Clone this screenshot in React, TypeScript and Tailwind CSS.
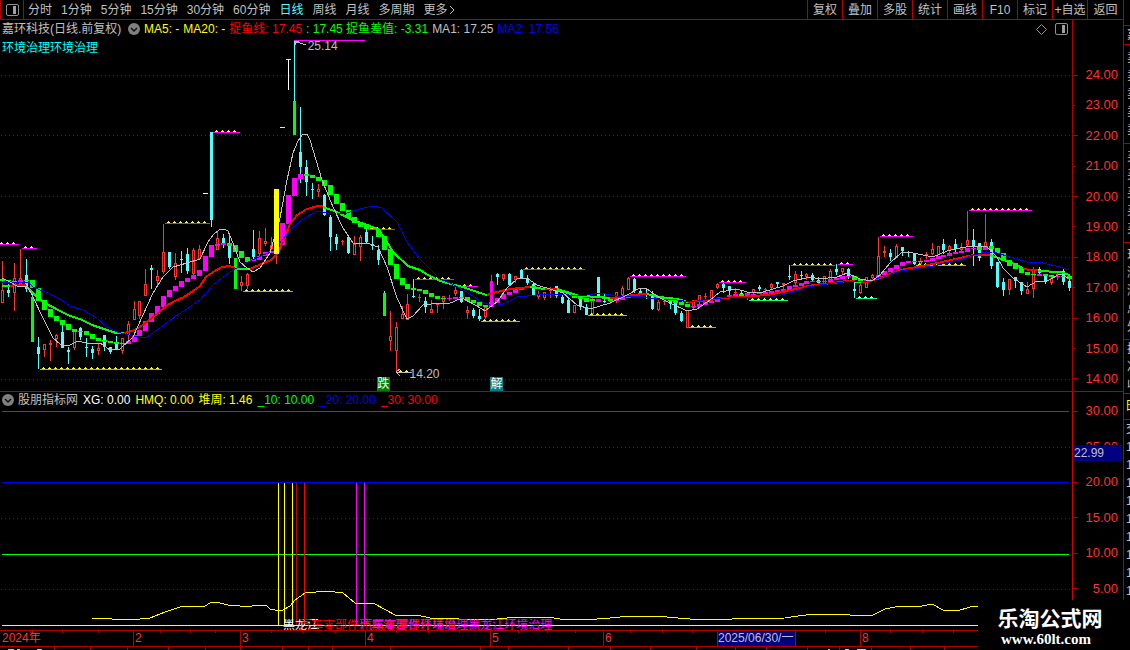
import { useState } from "react";

type Candle = [number, number, number, number, number, string];
type Step = [number, number, number, string];

// x, high, body top, body bottom, low, r = rising / c = falling
const candles: Candle[] = [
  [2, 261, 290, 303, 303, "r"], [8, 284, 290, 293, 297, "c"], [14, 263, 278, 293, 311, "r"], [20, 249, 278, 284, 284, "r"],
  [26, 259, 275, 289, 292, "c"], [32, 293, 297, 298, 298, "c"], [38, 337, 347, 354, 369, "c"], [44, 344, 344, 350, 357, "r"],
  [50, 340, 343, 345, 361, "r"], [56, 334, 335, 339, 347, "r"], [62, 325, 332, 348, 348, "c"], [68, 347, 350, 352, 364, "c"],
  [74, 329, 331, 348, 350, "r"], [80, 327, 328, 337, 340, "c"], [86, 338, 347, 348, 357, "c"], [92, 346, 349, 353, 359, "c"],
  [98, 344, 348, 351, 355, "r"], [104, 335, 335, 347, 351, "c"], [110, 347, 347, 352, 354, "c"], [116, 336, 344, 350, 350, "c"],
  [122, 338, 338, 351, 354, "r"], [128, 321, 324, 335, 344, "r"], [134, 301, 309, 320, 320, "r"], [139, 301, 301, 316, 319, "r"],
  [145, 269, 284, 296, 296, "r"], [151, 265, 268, 270, 289, "c"], [157, 270, 276, 281, 285, "r"], [163, 224, 252, 272, 274, "r"],
  [169, 252, 252, 267, 269, "c"], [175, 253, 263, 277, 280, "r"], [181, 251, 259, 260, 273, "c"], [187, 248, 254, 271, 274, "c"],
  [193, 248, 250, 274, 275, "r"], [199, 245, 249, 259, 260, "r"], [211, 132, 132, 220, 227, "c"], [217, 232, 238, 250, 250, "r"],
  [223, 234, 238, 243, 248, "c"], [229, 235, 244, 258, 264, "c"], [241, 276, 282, 286, 291, "r"], [247, 273, 274, 286, 289, "r"],
  [253, 230, 249, 257, 259, "c"], [259, 231, 238, 254, 259, "r"], [265, 228, 241, 244, 246, "r"], [271, 237, 245, 250, 251, "r"],
  [276, 250, 254, 254, 264, "r"], [294, 40, 101, 101, 101, "c"], [300, 107, 152, 167, 183, "c"], [306, 160, 167, 182, 196, "c"],
  [312, 183, 189, 190, 199, "c"], [318, 184, 189, 192, 197, "r"], [324, 194, 195, 215, 216, "c"], [330, 215, 217, 237, 251, "c"],
  [336, 234, 237, 244, 250, "c"], [342, 240, 241, 242, 245, "r"], [348, 237, 237, 253, 254, "c"], [354, 236, 244, 255, 255, "r"],
  [360, 235, 237, 247, 261, "r"], [366, 229, 232, 242, 243, "c"], [372, 236, 244, 246, 250, "c"], [378, 245, 250, 260, 265, "c"],
  [384, 291, 293, 294, 294, "c"], [390, 311, 336, 341, 351, "r"], [396, 322, 327, 351, 372, "r"], [402, 306, 314, 319, 319, "r"],
  [407, 294, 304, 320, 320, "r"], [413, 279, 296, 297, 298, "c"], [419, 294, 297, 298, 302, "r"], [425, 297, 301, 307, 313, "c"],
  [431, 300, 309, 313, 313, "r"], [437, 303, 304, 305, 313, "r"], [443, 296, 296, 302, 309, "r"], [449, 295, 298, 299, 301, "r"],
  [455, 287, 290, 294, 296, "r"], [461, 291, 291, 302, 303, "c"], [467, 306, 310, 313, 319, "r"], [473, 308, 310, 316, 318, "c"],
  [479, 309, 316, 319, 321, "c"], [485, 307, 307, 317, 319, "r"], [491, 275, 281, 281, 281, "r"], [497, 273, 274, 277, 285, "c"],
  [503, 274, 274, 279, 281, "r"], [509, 273, 274, 285, 285, "c"], [515, 276, 276, 280, 283, "r"], [521, 269, 270, 278, 279, "c"],
  [527, 275, 278, 283, 285, "c"], [533, 283, 284, 295, 295, "c"], [538, 291, 294, 297, 299, "r"], [544, 292, 292, 298, 300, "r"],
  [550, 287, 290, 291, 298, "r"], [556, 286, 286, 296, 298, "c"], [562, 295, 297, 303, 304, "c"], [568, 298, 300, 313, 313, "c"],
  [574, 305, 305, 313, 313, "r"], [580, 297, 298, 307, 310, "c"], [586, 304, 307, 315, 315, "c"], [592, 298, 300, 314, 314, "r"],
  [598, 277, 277, 297, 298, "c"], [604, 294, 301, 302, 303, "c"], [610, 297, 300, 302, 304, "r"], [616, 292, 292, 299, 303, "r"],
  [622, 286, 288, 295, 296, "r"], [628, 277, 278, 290, 290, "r"], [634, 278, 279, 291, 293, "c"], [640, 289, 291, 293, 293, "c"],
  [646, 288, 294, 295, 299, "c"], [652, 291, 295, 309, 310, "c"], [658, 300, 302, 310, 311, "r"], [664, 298, 301, 302, 305, "r"],
  [670, 300, 300, 304, 309, "c"], [675, 302, 302, 313, 315, "c"], [681, 311, 313, 321, 322, "c"], [687, 310, 310, 328, 328, "r"],
  [693, 300, 300, 308, 310, "r"], [699, 295, 295, 302, 305, "r"], [705, 293, 296, 297, 300, "r"], [711, 290, 290, 299, 299, "r"],
  [717, 283, 284, 288, 289, "r"], [723, 283, 284, 288, 293, "c"], [729, 286, 286, 291, 296, "c"], [735, 288, 292, 293, 296, "r"],
  [741, 290, 293, 295, 297, "c"], [747, 292, 293, 298, 300, "r"], [753, 289, 289, 293, 295, "r"], [759, 285, 287, 289, 291, "c"],
  [765, 288, 289, 290, 292, "r"], [771, 283, 284, 288, 290, "r"], [777, 282, 282, 284, 288, "c"], [783, 283, 283, 285, 290, "r"],
  [789, 265, 276, 277, 280, "c"], [795, 271, 274, 283, 286, "r"], [801, 271, 275, 276, 278, "c"], [806, 273, 274, 277, 280, "r"],
  [812, 273, 275, 280, 282, "c"], [818, 277, 280, 283, 285, "c"], [824, 276, 276, 284, 284, "r"], [830, 269, 271, 280, 283, "r"],
  [836, 264, 269, 272, 275, "c"], [842, 268, 268, 272, 275, "r"], [848, 268, 269, 277, 279, "c"], [854, 282, 289, 291, 298, "c"],
  [860, 282, 285, 293, 294, "r"], [866, 277, 277, 288, 288, "r"], [872, 274, 275, 278, 279, "r"], [878, 237, 256, 277, 280, "r"],
  [884, 246, 251, 253, 257, "r"], [890, 249, 253, 257, 261, "c"], [896, 244, 246, 258, 258, "r"], [902, 247, 247, 251, 256, "c"],
  [908, 251, 252, 253, 257, "c"], [914, 254, 254, 264, 265, "c"], [920, 258, 261, 264, 265, "r"], [926, 252, 254, 255, 259, "r"],
  [932, 243, 249, 254, 255, "r"], [938, 246, 246, 255, 255, "r"], [943, 239, 244, 250, 254, "c"], [949, 245, 246, 251, 254, "r"],
  [955, 239, 244, 249, 252, "c"], [961, 243, 247, 250, 253, "r"], [967, 211, 240, 245, 246, "r"], [973, 229, 240, 247, 266, "c"],
  [979, 243, 243, 258, 261, "c"], [985, 214, 242, 247, 248, "r"], [991, 239, 242, 266, 269, "c"], [997, 262, 262, 287, 288, "c"],
  [1003, 278, 282, 290, 296, "c"], [1009, 279, 279, 290, 295, "r"], [1015, 277, 277, 281, 288, "c"], [1021, 282, 282, 291, 295, "c"],
  [1027, 282, 289, 294, 294, "r"], [1033, 267, 270, 289, 298, "r"], [1039, 267, 269, 273, 274, "c"], [1045, 274, 274, 281, 284, "c"],
  [1051, 276, 278, 283, 285, "r"], [1057, 271, 274, 275, 280, "r"], [1063, 269, 271, 282, 285, "c"], [1069, 276, 281, 288, 291, "c"],
];

// x, top, bottom, m = up trend / g = down trend
const steps: Step[] = [
  [2, 279, 281, "g"], [8, 280, 281, "g"], [14, 281, 282, "g"], [20, 280, 282, "m"], [26, 280, 281, "g"], [32, 280, 288, "g"],
  [38, 288, 301, "g"], [44, 300, 310, "g"], [50, 309, 317, "g"], [56, 316, 321, "g"], [62, 320, 325, "g"], [68, 324, 330, "g"],
  [74, 329, 332, "g"], [80, 331, 332, "g"], [86, 331, 335, "g"], [92, 334, 339, "g"], [98, 338, 341, "g"], [104, 340, 342, "g"],
  [110, 341, 343, "g"], [116, 342, 344, "g"], [122, 343, 344, "g"], [128, 341, 344, "m"], [134, 335, 342, "m"], [139, 330, 336, "m"],
  [145, 321, 331, "m"], [151, 313, 322, "m"], [157, 306, 314, "m"], [163, 296, 307, "m"], [169, 290, 297, "m"], [175, 286, 291, "m"],
  [181, 281, 287, "m"], [187, 278, 282, "m"], [193, 275, 279, "m"], [199, 270, 276, "m"], [205, 256, 271, "m"], [211, 245, 257, "m"],
  [217, 244, 246, "m"], [223, 243, 245, "m"], [229, 243, 246, "g"], [235, 245, 252, "g"], [241, 251, 258, "g"], [247, 257, 262, "g"],
  [253, 259, 261, "m"], [259, 256, 260, "m"], [265, 252, 256, "m"], [271, 251, 253, "m"], [282, 223, 245, "m"], [288, 195, 224, "m"],
  [294, 178, 196, "m"], [300, 174, 179, "m"], [306, 174, 176, "g"], [312, 175, 178, "g"], [318, 177, 181, "g"], [324, 180, 186, "g"],
  [330, 185, 195, "g"], [336, 194, 204, "g"], [342, 203, 211, "g"], [348, 210, 218, "g"], [354, 217, 223, "g"], [360, 222, 227, "g"],
  [366, 224, 229, "g"], [372, 227, 230, "g"], [378, 229, 237, "g"], [384, 236, 250, "g"], [390, 249, 265, "g"], [396, 264, 279, "g"],
  [402, 278, 285, "g"], [407, 284, 289, "g"], [413, 288, 290, "g"], [419, 289, 291, "g"], [425, 290, 294, "g"], [431, 293, 297, "g"],
  [437, 296, 299, "g"], [443, 298, 299, "g"], [449, 298, 299, "m"], [455, 297, 299, "m"], [461, 297, 298, "g"], [467, 297, 301, "g"],
  [473, 300, 303, "g"], [479, 302, 306, "g"], [485, 305, 307, "g"], [491, 302, 307, "m"], [497, 298, 303, "m"], [503, 294, 299, "m"],
  [509, 292, 295, "m"], [515, 289, 293, "m"], [521, 288, 290, "m"], [527, 286, 288, "m"], [533, 286, 288, "g"], [538, 287, 289, "g"],
  [544, 288, 290, "g"], [550, 288, 289, "m"], [556, 289, 291, "g"], [562, 291, 293, "g"], [568, 292, 295, "g"], [574, 295, 298, "g"],
  [580, 297, 299, "g"], [586, 298, 302, "g"], [592, 299, 301, "g"], [598, 299, 302, "m"], [604, 298, 299, "g"], [610, 299, 301, "g"],
  [616, 299, 301, "m"], [622, 297, 300, "m"], [628, 295, 298, "m"], [634, 294, 295, "m"], [640, 293, 295, "m"], [646, 293, 295, "g"],
  [652, 294, 296, "g"], [658, 296, 298, "g"], [664, 297, 299, "g"], [670, 299, 301, "g"], [675, 300, 303, "g"], [681, 302, 305, "g"],
  [687, 304, 307, "g"], [693, 306, 307, "m"], [699, 304, 307, "m"], [705, 302, 305, "m"], [711, 301, 303, "m"], [717, 299, 302, "m"],
  [723, 297, 298, "m"], [729, 295, 297, "m"], [735, 294, 296, "m"], [741, 294, 297, "g"], [747, 293, 296, "m"], [753, 294, 295, "m"],
  [759, 293, 294, "m"], [765, 292, 294, "m"], [771, 291, 293, "m"], [777, 290, 292, "m"], [783, 289, 291, "m"], [789, 286, 290, "m"],
  [795, 285, 287, "m"], [801, 283, 286, "m"], [806, 281, 284, "m"], [812, 281, 282, "m"], [818, 281, 282, "g"], [824, 281, 282, "m"],
  [830, 279, 282, "m"], [836, 278, 280, "m"], [842, 276, 279, "m"], [848, 276, 277, "m"], [854, 276, 280, "g"], [860, 279, 281, "g"],
  [866, 280, 281, "m"], [872, 279, 281, "m"], [878, 275, 279, "m"], [884, 271, 275, "m"], [890, 268, 272, "m"], [896, 265, 269, "m"],
  [902, 262, 266, "m"], [908, 261, 263, "m"], [914, 261, 262, "m"], [920, 261, 262, "g"], [926, 260, 262, "m"], [932, 258, 261, "m"],
  [938, 256, 259, "m"], [943, 255, 257, "m"], [949, 253, 256, "m"], [955, 252, 254, "m"], [961, 251, 253, "m"], [967, 248, 252, "m"],
  [973, 248, 249, "m"], [979, 247, 250, "g"], [985, 246, 250, "m"], [991, 246, 249, "g"], [997, 248, 253, "g"], [1003, 253, 261, "g"],
  [1009, 260, 266, "g"], [1015, 263, 269, "g"], [1021, 268, 273, "g"], [1027, 272, 275, "g"], [1033, 274, 275, "g"], [1039, 274, 276, "m"],
  [1045, 274, 276, "g"], [1051, 275, 277, "g"], [1057, 276, 277, "m"], [1063, 276, 277, "g"], [1069, 276, 279, "g"],
];

// support / pressure segments: x1, x2, y, colour
const levels: [number, number, number, string][] = [
  [-2, 19, 244, "#ff00ff"], [22, 37, 248, "#ff00ff"], [165, 210, 223, "#ff00ff"], [213, 240, 132, "#ff00ff"],
  [368, 395, 229, "#ff00ff"], [415, 454, 279, "#ff00ff"], [461, 478, 286, "#ff00ff"], [523, 585, 269, "#ff00ff"],
  [630, 686, 276, "#ff00ff"], [719, 746, 282, "#ff00ff"], [791, 835, 265, "#ff00ff"], [838, 853, 264, "#ff00ff"],
  [880, 913, 236, "#ff00ff"], [969, 1032, 210, "#ff00ff"], [40, 162, 369, "#00ff80"], [243, 293, 291, "#00ff80"],
  [397, 412, 372, "#00ff80"], [481, 520, 321, "#00ff80"], [588, 627, 315, "#00ff80"], [689, 716, 327, "#00ff80"],
  [749, 788, 300, "#00ff80"], [856, 877, 298, "#00ff80"], [916, 966, 265, "#00ff80"],
];

const trend: [string, string][] = [
  ["#00ff00", "2,286 10,286"],
  ["#ff0000", "10,286 15,285 26,285"],
  ["#00ff00", "26,286 30,290 36,296 45,303 60,311 70,316 80,319 92,325 104,329 116,333 124,333"],
  ["#ff0000", "124,333 132,331 140,327 148,321 157,314 166,306 175,301 184,297 193,291 200,286 206,277 213,272 222,267 230,266 235,268"],
  ["#00ff00", "235,269 250,269"],
  ["#ff0000", "250,269 259,265 271,260 278,253 284,240 290,224 297,215 307,209 318,206 323,206"],
  ["#00ff00", "323,207 337,212 350,219 367,225 378,229 387,242 393,252 408,266 420,270 428,275 440,281 447,283 463,287 480,293 487,295"],
  ["#ff0000", "487,295 497,292 510,289 530,287"],
  ["#00ff00", "530,287 545,289"],
  ["#ff0000", "545,289 557,289"],
  ["#00ff00", "557,289 570,293 580,296 600,297 610,298"],
  ["#ff0000", "610,298 620,297 633,295 647,294"],
  ["#00ff00", "647,294 660,297 677,299 688,302"],
  ["#ff0000", "688,302 700,301 710,300 720,298 740,297 767,295 787,291 813,285 833,283 847,281 855,281"],
  ["#00ff00", "855,282 861,282"],
  ["#ff0000", "861,282 867,282 883,277 900,270 933,264 960,258 973,255 990,255"],
  ["#00ff00", "990,255 1007,261 1023,268"],
  ["#ff0000", "1023,268 1028,270 1038,270"],
  ["#00ff00", "1038,271 1060,272 1070,275"],
];

const ma2 =
  "2,282 28,282 33,287 50,294 60,299 70,306 83,310 97,318 107,327 117,332 137,337 147,337 160,328 173,318 187,309 200,300 213,285 230,272 248,262 270,252 278,245 290,230 303,219 318,211 327,213 347,213 360,209 373,206 382,208 397,222 407,242 420,259 440,279 450,283 467,292 480,301 493,306 503,304 517,297 537,295 557,294 580,296 600,293 617,296 637,296 657,299 677,300 690,302 710,299 733,297 767,298 790,293 807,287 827,284 843,282 867,281 883,277 900,271 933,266 960,260 973,255 987,252 997,253 1010,257 1027,262 1043,263 1060,267 1069,270";

const ma1 =
  "2,278 10,282 17,286 27,286 33,297 43,318 53,338 60,344 68,346 78,341 90,344 100,343 110,350 120,349 133,337 143,315 153,293 163,277 173,267 187,263 200,259 208,242 214,234 219,230 224,229 228,231 233,243 240,262 247,268 253,272 260,268 270,253 280,218 287,180 293,153 298,141 302,135 307,134 310,140 313,150 322,180 333,207 343,228 353,243 367,243 378,247 387,267 397,298 407,319 413,316 423,305 440,303 448,304 462,298 477,306 485,311 497,302 507,288 517,279 527,278 537,285 553,290 563,293 577,305 590,309 610,303 627,295 640,288 647,289 660,298 670,303 687,311 697,309 710,300 720,292 737,289 747,292 763,292 783,286 793,281 810,277 820,279 837,277 847,273 860,279 872,281 880,275 890,263 902,252 913,253 933,257 947,251 960,248 973,246 987,247 997,257 1003,268 1013,278 1027,287 1037,281 1047,281 1060,274 1068,278";

const week =
  "92,618 112,619 130,620 150,618 165,612 180,607 205,606 210,603 216,602 228,605 240,606 247,607 257,605 266,605 270,609 275,610 283,610 290,606 295,600 305,593 327,591 343,593 355,603 375,604 395,615 417,615 430,618 487,620 517,617 547,617 560,619 585,620 610,618 630,616 655,616 690,619 732,619 785,618 798,616 815,614 845,614 850,615 873,615 885,609 900,606 922,606 932,604 943,610 957,611 970,607 980,606";

const bars: [number, string][] = [
  [278, "#ffff00"], [284, "#ffff00"], [292, "#ffff00"], [296, "#c00000"], [304, "#ff0000"], [356, "#ff00ff"], [364, "#ff00ff"],
];

const periods = ["分时", "1分钟", "5分钟", "15分钟", "30分钟", "60分钟", "日线", "周线", "月线", "多周期", "更多"];
const tools = ["复权", "叠加", "多股", "统计", "画线", "F10", "标记", "+自选", "返回"];
const prices = [24, 23, 22, 21, 20, 19, 18, 17, 16, 15, 14];
const scale = [30, 25, 20, 15, 10, 5];
const topTicks = [30, 62, 98, 160, 190, 215, 271, 302, 334, 396, 428, 459, 518, 547, 575, 630, 662, 692, 825, 890, 922, 953];
const lowTicks = [54, 90, 127, 168, 205, 240, 282, 308, 332, 390, 480, 508, 568, 610, 650, 696, 735, 766, 807, 839, 871, 910, 944];

function PanelIcon() {
  return (
    <svg width="13" height="12" viewBox="0 0 13 12" fill="none">
      <rect x="0.5" y="0.5" width="12" height="11" rx="1.5" stroke="#909090" />
      <rect x="7" y="2" width="3" height="8" fill="#a0a0a0" />
    </svg>
  );
}

function RoundArrow() {
  return (
    <svg width="12" height="12" viewBox="0 0 12 12" fill="none">
      <circle cx="6" cy="6" r="6" fill="#808080" />
      <path d="M3 5l3 3 3-3" stroke="#101010" strokeWidth="1.5" />
    </svg>
  );
}

function Triangles({ x1, x2, y }: { x1: number; x2: number; y: number }) {
  const list = [];
  for (let x = x1 + 3; x <= x2 - 4; x += 6) list.push(x);
  return (
    <>
      {list.map((x) => (
        <path key={x} d={`M${x} ${y - 2}h1v1h1v1h-3v-1h1z`} fill="#ffff00" />
      ))}
    </>
  );
}

function KLine() {
  return (
    <svg className="block h-[353px] w-full" viewBox="0 38 1072 353" preserveAspectRatio="none" shapeRendering="crispEdges" fill="none">
      {[75, 135, 196, 257, 318, 379].map((y) => (
        <path key={y} d={`M1 ${y}.5H1072`} stroke="#a00000" strokeDasharray="1 3" />
      ))}

      {candles.map(([x, high, top, bottom, low, kind]) => {
        const color = kind === "r" ? "#ff3232" : "#54fcfc";
        return (
          <g key={x}>
            <path d={`M${x}.5 ${high}V${top}M${x}.5 ${bottom}V${low}`} stroke={color} />
            {kind === "r" && bottom - top > 2 ? (
              <rect x={x - 0.5} y={top + 0.5} width="2" height={bottom - top - 1} stroke={color} />
            ) : (
              <rect x={x - 1} y={top} width="3" height={bottom - top} fill={color} />
            )}
          </g>
        );
      })}

      {steps.map(([x, top, bottom, kind]) => (
        <rect key={x} x={x - 2} y={top} width="5" height={bottom - top} fill={kind === "m" ? "#ff00ff" : "#00ff00"} />
      ))}

      <rect x="31" y="297" width="3" height="45" fill="#00ff00" />
      <rect x="234" y="258" width="3" height="31" fill="#00ff00" />
      <rect x="293" y="101" width="3" height="34" fill="#00ff00" />
      <rect x="383" y="293" width="3" height="23" fill="#00ff00" />
      <rect x="490" y="281" width="3" height="26" fill="#ff00ff" />

      {levels.map(([x1, x2, y, color]) => (
        <g key={`${x1}-${y}`}>
          <path d={`M${x1} ${y}.5H${x2}`} stroke={color} />
          <Triangles x1={x1} x2={x2} y={y} />
        </g>
      ))}
      <path d="M294 40.5H365" stroke="#ff00ff" />

      {trend.map(([color, points]) => (
        <polyline key={points} points={points} stroke={color} strokeWidth="2" />
      ))}
      <polyline points={ma2} stroke="#0000ff" />
      <polyline points={ma1} stroke="#c0c0c0" />

      <rect x="274" y="189" width="5" height="65" fill="#ffff00" />
      <path d="M288.5 60V90" stroke="#ffffff" />
      <path d="M286 59.5h5M280 127.5h5" stroke="#ffff00" />
      <path d="M203 193.5h5" stroke="#ffff80" />

      <path d="M295 41.5h4M295.5 42v3M296 42l4 1 6 2" stroke="#c0c0c0" />
      <path d="M396 372.5H411M400 369l-4 3 4 4" stroke="#c0c0c0" />
    </svg>
  );
}

function Indicator() {
  return (
    <svg className="block h-[222px] w-full" viewBox="0 408 1072 222" preserveAspectRatio="none" shapeRendering="crispEdges" fill="none">
      {[447, 518, 589].map((y) => (
        <path key={y} d={`M1 ${y}.5H1072`} stroke="#a00000" strokeDasharray="1 3" />
      ))}
      <path d="M2 411.5H1069" stroke="#ff0000" />
      <path d="M2 482.5H1069" stroke="#0000ff" />
      <path d="M2 554.5H1069" stroke="#00ff00" />
      <path d="M2 625.5H1069" stroke="#ffff00" />
      {bars.map(([x, color]) => (
        <path key={x} d={`M${x}.5 483V625`} stroke={color} />
      ))}
      <polyline points={week} stroke="#ffff00" />
    </svg>
  );
}

function App() {
  const [period, setPeriod] = useState("日线");

  return (
    <div className="relative flex min-h-screen w-full overflow-hidden bg-black font-['Liberation_Sans','Noto_Sans_CJK_SC',sans-serif] text-[12px] leading-4 text-[#c0c0c0]">
      <main className="flex min-w-0 flex-1 flex-col">
        <nav className="flex h-5 items-stretch justify-between border-b border-[#b00000]">
          <div className="flex items-center gap-1">
            <button aria-label="侧栏" className="flex h-full w-6 items-center justify-center border-x border-[#b00000]">
              <PanelIcon />
            </button>
            <div className="flex items-center gap-[9px]">
              {periods.map((p) => (
                <button
                  key={p}
                  onClick={() => setPeriod(p)}
                  className={p === period ? "whitespace-nowrap text-[#54fcfc]" : "whitespace-nowrap"}
                >
                  {p}
                </button>
              ))}
              <svg className="-ml-2" width="6" height="10" viewBox="0 0 6 10" fill="none">
                <path d="M1 1l4 4-4 4" stroke="#c0c0c0" />
              </svg>
            </div>
          </div>
          <div className="flex">
            {tools.map((t) => (
              <button key={t} className="w-[35px] whitespace-nowrap border-l border-[#b00000] text-center last:w-9">
                {t}
              </button>
            ))}
          </div>
        </nav>

        <section className="flex border-b border-[#b00000]">
          <div className="relative min-w-0 flex-1">
            <header className="flex h-[18px] items-center gap-1 whitespace-nowrap pl-[2px] pr-1">
              <span className="w-[122px]">嘉环科技(日线.前复权)</span>
              <RoundArrow />
              <span className="text-[#ffff00]">MA5: -</span>
              <span className="text-[#ffff00]">MA20: -</span>
              <span className="text-[#ff0000]">捉鱼线: 17.45</span>
              <span className="text-[#00ff00]">: 17.45 捉鱼差值: -3.31</span>
              <span>MA1: 17.25</span>
              <span className="text-[#0000ff]">MA2: 17.56</span>
              <div className="ml-auto flex items-center gap-2">
                <svg width="11" height="11" viewBox="0 0 11 11" fill="none">
                  <path d="M5.5 0.5l5 5-5 5-5-5z" stroke="#909090" />
                </svg>
                <PanelIcon />
              </div>
            </header>
            <KLine />
            <span className="absolute left-[2px] top-5 text-[#00ffff]">环境治理环境治理</span>
            <span className="absolute left-[28.7%] top-[18px]">25.14</span>
            <span className="absolute left-[38.2%] top-[346px]">14.20</span>
            <span className="absolute bottom-0 left-[35.15%] h-[14px] w-[13px] bg-[#008000] text-center leading-[14px] text-white">跌</span>
            <span className="absolute bottom-0 left-[45.7%] h-[14px] w-[13px] bg-[#008080] text-center leading-[14px] text-white">解</span>
          </div>
          <div className="flex w-[51px] flex-col justify-between border-l border-[#b00000] pb-1 pt-[47px] text-[13px] text-[#ff3232]">
            {prices.map((p) => (
              <div key={p} className="flex items-center justify-between pr-[5px]">
                <i className={p % 2 ? "h-px w-[2px] bg-[#b00000]" : "h-px w-[5px] bg-[#b00000]"} />
                {p}.00
              </div>
            ))}
          </div>
        </section>

        <section className="flex">
          <div className="relative min-w-0 flex-1 overflow-hidden">
            <header className="flex h-4 items-center gap-[5px] whitespace-nowrap pl-[2px]">
              <RoundArrow />
              <span className="-ml-px">股朋指标网</span>
              <span className="text-white">XG: 0.00</span>
              <span className="text-[#ffff00]">HMQ: 0.00</span>
              <span className="text-[#ffff00]">堆周: 1.46</span>
              <span className="text-[#00ff00]">_10: 10.00</span>
              <span className="text-[#0000ff]">_20: 20.00</span>
              <span className="text-[#ff0000]">_30: 30.00</span>
            </header>
            <Indicator />
            <div className="absolute bottom-0 left-0 h-[11px] w-full overflow-hidden whitespace-nowrap">
              <span className="absolute left-[26.4%] top-[-2px] text-white">黑龙江</span>
              <span className="absolute left-[27.9%] top-[-2px] text-[#ff0000]">汽车零部件环境治理</span>
              <span className="absolute left-[34.7%] top-[-2px] text-[#ff0000]">汽车零部件环境</span>
              <span className="absolute left-[33.6%] top-[-2px] text-[#ff00ff]">汽车零部件环境治理黑龙江环境治理</span>
            </div>
          </div>
          <div className="relative flex w-[51px] flex-col justify-between border-l border-[#d00000] pb-[33px] pt-[11px] text-[13px] text-[#ff3232]">
            {scale.map((s) => (
              <div key={s} className="flex items-center justify-between pr-[5px]">
                <i className="h-px w-[5px] bg-[#b00000]" />
                {s}.00
              </div>
            ))}
            <output className="absolute left-0 top-[53px] h-4 w-[49px] bg-[#000080] pl-px text-[12px] text-[#c0c0c0]">22.99</output>
          </div>
        </section>

        <footer>
          <div className="relative grid h-[17px] grid-cols-[133fr_107fr_125fr_125fr_113fr_114fr_79fr_64fr_263fr] border-y border-[#b00000] leading-[15px] text-[#ff3232]">
            <span className="pl-[2px]">2024年</span>
            {["2", "3", "4", "5", "6"].map((m) => (
              <span key={m} className="border-l border-[#b00000] pl-px">{m}</span>
            ))}
            <span className="whitespace-nowrap border-x border-[#b00000] bg-[#000080] text-[#c0c0c0]">2025/06/30/一</span>
            <span />
            <span className="border-l border-[#b00000] pl-px">8</span>
            <svg className="absolute left-0 top-0 h-[2px] w-full" viewBox="0 0 1123 2" preserveAspectRatio="none">
              {topTicks.map((x) => (
                <rect key={x} x={x} width="1" height="2" fill="#b00000" />
              ))}
            </svg>
          </div>
          <svg className="block h-[3px] w-full" viewBox="0 0 1123 3" preserveAspectRatio="none" shapeRendering="crispEdges">
            {lowTicks.map((x) => (
              <rect key={x} x={x} width="1" height="3" fill="#b00000" />
            ))}
            <path d="M8 2.5h6m3 0h3m17 0h5M828 2.5h2" stroke="#c0c0c0" />
            <path d="M845 2.5h4m8 0h9" stroke="#54fcfc" />
          </svg>
        </footer>
      </main>

      <aside aria-hidden="true" className="flex w-[7px] flex-col overflow-hidden border-l border-[#b00000] pt-[25px]">
        <div className="h-[20px] border-y border-[#b00000] pl-[3px] leading-[18px]">嘉</div>
        <div className="border-b border-[#b00000] py-1 pl-[3px] leading-[18px]">
          {["卖", "卖", "卖", "卖", "卖"].map((c, i) => <div key={i}>{c}</div>)}
        </div>
        <div className="border-b border-[#b00000] py-1 pl-[3px] leading-[18px]">
          {["买", "买", "买", "买", "买"].map((c, i) => <div key={i}>{c}</div>)}
        </div>
        <div className="border-b border-[#b00000] py-[3px] pl-[3px] leading-[18px]">
          {["现", "涨", "涨", "总", "外"].map((c, i) => <div key={i}>{c}</div>)}
        </div>
        <div className="h-[54px] border-b border-[#b00000] pl-[3px] leading-[18px]">
          {["换", "净", "收"].map((c, i) => <div key={i}>{c}</div>)}
        </div>
        <div className="h-[26px] border-b border-[#b00000] py-1 pl-px text-[#ffff00]">日</div>
        <div className="pl-[2px] leading-[18px]">
          <div>交</div>
          {[1, 2, 3, 4, 5, 6, 7, 8, 9].map((n) => <div key={n}>1</div>)}
        </div>
      </aside>

      <div className="absolute bottom-0 right-0 flex h-[50px] w-[152px] flex-col items-center bg-black pr-2 pt-[7px] text-white">
        <strong className="text-[21px] font-bold leading-6">乐淘公式网</strong>
        <a href="#" className="pr-2 font-['Liberation_Serif',serif] text-[15px] font-bold leading-4">
          www.60lt.com
        </a>
      </div>
    </div>
  );
}

export default App;
